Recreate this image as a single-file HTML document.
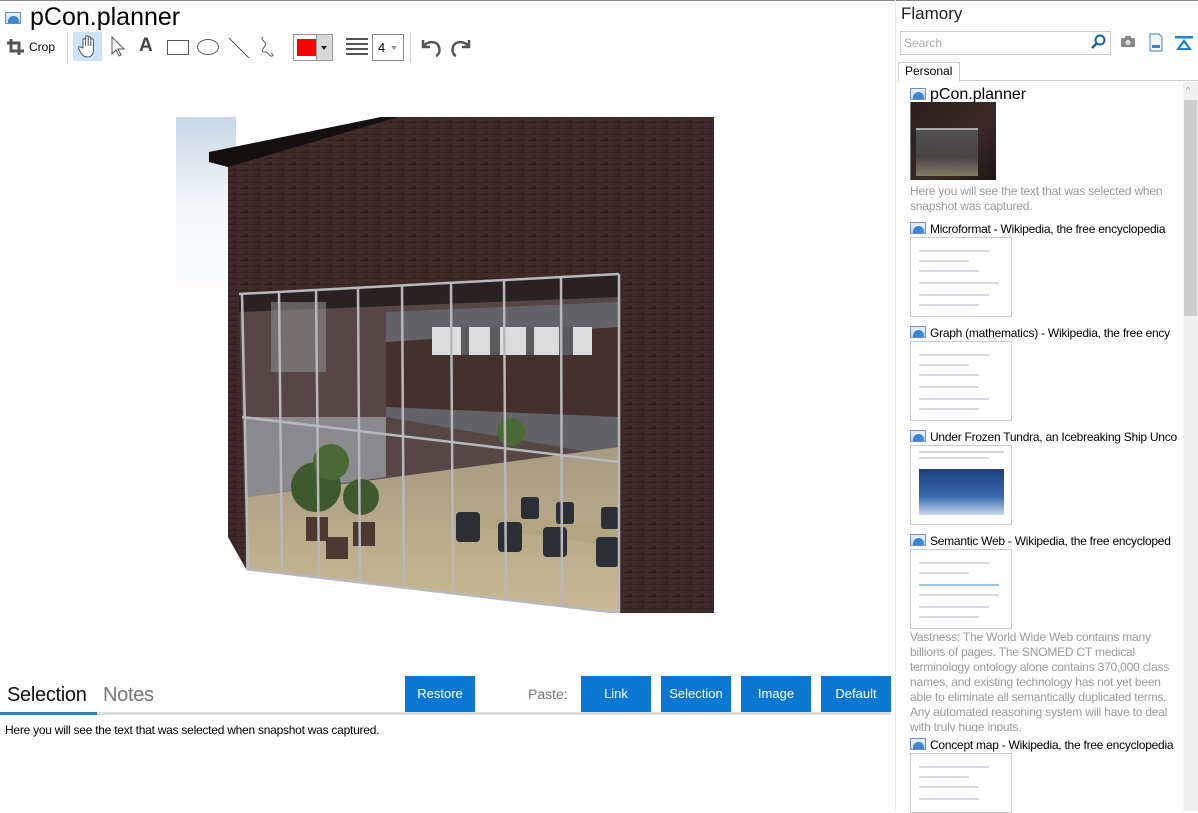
<!DOCTYPE html>
<html><head><meta charset="utf-8">
<style>
*{margin:0;padding:0;box-sizing:border-box}
body{width:1198px;height:811px;overflow:hidden;background:#fff;font-family:"Liberation Sans","DejaVu Sans",sans-serif;position:relative;color:#000}
.abs{position:absolute}
.btn{position:absolute;top:676px;height:36px;background:#0a78d0;color:#fff;font-size:13px;text-align:center;line-height:36px}
.ico{display:inline-block;width:16px;height:12px;border:1px solid #6b8fb6;background:linear-gradient(#e8f2fb,#bfd7ee);position:relative;border-radius:1px}
.ico:after{content:"";position:absolute;left:2px;top:3px;width:11px;height:7px;border-radius:7px 7px 0 0;background:#3a86d0}
.st{position:absolute;left:910px;font-size:12px;letter-spacing:-0.25px;white-space:nowrap;overflow:hidden;width:270px}
.st .ico{margin-right:4px;vertical-align:-1px}
.th{position:absolute;left:910px;width:102px;height:80px;border:1px solid #ccc;background:#fff;overflow:hidden}
.th i{position:absolute;left:8px;height:2px;background:#d4d8de;display:block}
.gtxt{position:absolute;left:910px;width:272px;font-size:12px;letter-spacing:-0.2px;line-height:15px;color:#9a9a9a}
</style></head><body>
<div class="abs" style="left:0;top:0;width:1198px;height:1px;background:#888"></div>
<div class="abs" style="left:5px;top:11px"><span class="ico"></span></div>
<div class="abs" style="left:30px;top:3px;font-size:25px">pCon.planner</div>
<svg class="abs" style="left:6px;top:38px" width="20" height="18" viewBox="0 0 20 18"><path d="M5 1v12h13M1 5h12v12" stroke="#555" stroke-width="3" fill="none"/></svg>
<div class="abs" style="left:29px;top:40px;font-size:12px">Crop</div>
<div class="abs" style="left:67px;top:32px;width:1px;height:31px;background:#ccc"></div>
<div class="abs" style="left:73px;top:32px;width:29px;height:29px;background:#cce4f7"></div>
<svg class="abs" style="left:78px;top:34px" width="20" height="25" viewBox="0 0 20 25"><path d="M5 14V6a1.3 1.3 0 0 1 2.6 0v6V3a1.3 1.3 0 0 1 2.6 0v9V4a1.3 1.3 0 0 1 2.6 0v8V6a1.3 1.3 0 0 1 2.6 0v10c0 4-2 7-6 7s-5-2-7-5l-2-4a1.2 1.2 0 0 1 2-1z" fill="#fff" stroke="#555" stroke-width="1"/></svg>
<svg class="abs" style="left:110px;top:36px" width="18" height="22" viewBox="0 0 18 22"><path d="M2 1v17l4-4 3 6 2-1-3-6h6z" fill="#fff" stroke="#555"/></svg>
<div class="abs" style="left:139px;top:35px;font-size:19px;font-weight:bold;color:#444">A</div>
<div class="abs" style="left:167px;top:40px;width:22px;height:15px;border:1px solid #555"></div>
<div class="abs" style="left:197px;top:39px;width:22px;height:16px;border:1px solid #555;border-radius:50%"></div>
<svg class="abs" style="left:228px;top:37px" width="22" height="22"><path d="M1 1l20 20" stroke="#555"/></svg>
<svg class="abs" style="left:258px;top:35px" width="20" height="25" viewBox="0 0 20 25"><path d="M5 2c-4 3 5 5 2 9s-4 6 0 6 4 5 7 4-2-3 0-3" fill="none" stroke="#555"/></svg>
<div class="abs" style="left:293px;top:34px;width:40px;height:27px;border:1px solid #999;background:#fff"></div>
<div class="abs" style="left:297px;top:39px;width:19px;height:17px;background:#f00"></div>
<div class="abs" style="left:316px;top:34px;width:17px;height:27px;background:#d8d8d8;border:1px solid #999"></div>
<div class="abs" style="left:321px;top:46px;border:3px solid transparent;border-top:4px solid #222"></div>
<div class="abs" style="left:346px;top:38px;width:22px;height:2px;background:#555;box-shadow:0 5px 0 #555,0 10px 0 #555,0 15px 0 #555"></div>
<div class="abs" style="left:372px;top:34px;width:32px;height:27px;border:1px solid #888"></div>
<div class="abs" style="left:378px;top:40px;font-size:13px">4</div>
<div class="abs" style="left:391px;top:46px;border:3px solid transparent;border-top:4px solid #999"></div>
<div class="abs" style="left:410px;top:32px;width:1px;height:31px;background:#ccc"></div>
<svg class="abs" style="left:418px;top:36px" width="56" height="22" viewBox="0 0 56 22"><path d="M5 4v7h7M5 11C8 5 19 4 21 11s-3 9-3 9" fill="none" stroke="#555" stroke-width="2.5"/><path d="M51 4v7h-7M51 11C48 5 37 4 35 11s3 9 3 9" fill="none" stroke="#555" stroke-width="2.5"/></svg>

<svg class="abs" style="left:176px;top:117px" width="538" height="496" viewBox="0 0 538 496">
<defs>
<linearGradient id="sky" x1="0" y1="0" x2="0" y2="1"><stop offset="0" stop-color="#c7d7e6"/><stop offset=".45" stop-color="#f4f7fa"/><stop offset="1" stop-color="#fff"/></linearGradient>
<linearGradient id="wall" x1="0" y1="0" x2="1" y2="1"><stop offset="0" stop-color="#3e2a2a"/><stop offset=".5" stop-color="#442c2c"/><stop offset="1" stop-color="#2e1e1f"/></linearGradient>
<pattern id="brick" width="12" height="6" patternUnits="userSpaceOnUse"><rect width="12" height="6" fill="url(#wall)"/><path d="M0 5.5h12M6 0v3M0 3v2.5" stroke="#251617" stroke-width=".7" opacity=".5"/></pattern>
<linearGradient id="floor" x1="0" y1="0" x2="0" y2="1"><stop offset="0" stop-color="#a69a80"/><stop offset="1" stop-color="#c9b994"/></linearGradient>
</defs>
<rect width="538" height="496" fill="#fff"/>
<rect width="60" height="200" fill="url(#sky)"/>
<polygon points="52,42 215,0 538,0 538,496 443,496 70,452 52,420" fill="url(#brick)"/>
<polygon points="33,35 205,0 222,0 52,50 33,45" fill="#151010"/>
<polygon points="63,177 443,157 443,496 70,452" fill="#564646"/>
<polygon points="210,195 443,185 443,340 210,300" fill="#636367"/>
<polygon points="210,225 443,210 443,300 210,290" fill="#43302f"/>
<rect x="256" y="210" width="160" height="28" fill="#dcdcdc"/>
<rect x="285" y="210" width="8" height="28" fill="#5a5a5e"/><rect x="314" y="210" width="10" height="28" fill="#5a5a5e"/><rect x="350" y="210" width="8" height="28" fill="#5a5a5e"/><rect x="383" y="210" width="14" height="28" fill="#5a5a5e"/>
<polygon points="63,177 443,157 443,180 63,195" fill="#2a2222"/>
<polygon points="70,380 443,330 443,496 70,452" fill="url(#floor)"/>
<polygon points="70,300 210,300 210,360 70,380" fill="#8a8a8d"/>
<rect x="95" y="185" width="55" height="70" fill="#8a8a8a" opacity=".6"/>
<circle cx="140" cy="370" r="25" fill="#3f5a30"/><circle cx="155" cy="345" r="18" fill="#4a6a35"/><circle cx="185" cy="380" r="18" fill="#3f5a30"/><circle cx="335" cy="315" r="14" fill="#4a6a35"/>
<rect x="130" y="400" width="22" height="24" fill="#4a3a32"/><rect x="150" y="420" width="22" height="22" fill="#4a3a32"/><rect x="177" y="405" width="22" height="24" fill="#4a3a32"/>
<polygon points="300,395 443,410 443,430 300,410" fill="#b3a582"/>
<g fill="#2d2f36"><rect x="280" y="395" width="24" height="30" rx="4"/><rect x="322" y="405" width="24" height="30" rx="4"/><rect x="367" y="410" width="24" height="30" rx="4"/><rect x="420" y="420" width="23" height="30" rx="4"/><rect x="345" y="380" width="18" height="22" rx="3"/><rect x="380" y="385" width="18" height="22" rx="3"/><rect x="425" y="390" width="18" height="22" rx="3"/></g>
<g stroke="#b8b8bc" stroke-width="2.5" fill="none">
<polyline points="63,177 443,157"/>
<polyline points="66,300 443,345"/>
<polyline points="70,452 443,496"/>
<line x1="66" y1="177" x2="72" y2="452"/><line x1="103" y1="175" x2="106" y2="456"/><line x1="140" y1="173" x2="143" y2="461"/><line x1="182" y1="171" x2="184" y2="466"/><line x1="226" y1="168" x2="228" y2="472"/><line x1="275" y1="165" x2="277" y2="477"/><line x1="328" y1="162" x2="330" y2="484"/><line x1="385" y1="160" x2="386" y2="490"/><line x1="443" y1="157" x2="443" y2="496"/>
</g>
</svg>

<div class="abs" style="left:7px;top:684px;font-size:20px;color:#111;letter-spacing:-0.3px">Selection</div>
<div class="abs" style="left:103px;top:684px;font-size:20px;color:#777;letter-spacing:-0.3px">Notes</div>
<div class="abs" style="left:0;top:712px;width:891px;height:3px;background:#dcdcdc"></div>
<div class="abs" style="left:0;top:712px;width:97px;height:3px;background:#2e7fbf"></div>
<div class="btn" style="left:405px;width:70px">Restore</div>
<div class="abs" style="left:528px;top:686px;font-size:14px;color:#777">Paste:</div>
<div class="btn" style="left:581px;width:70px">Link</div>
<div class="btn" style="left:661px;width:70px">Selection</div>
<div class="btn" style="left:741px;width:70px">Image</div>
<div class="btn" style="left:821px;width:70px">Default</div>
<div class="abs" style="left:5px;top:723px;font-size:12px;letter-spacing:-0.25px">Here you will see the text that was selected when snapshot was captured.</div>

<div class="abs" style="left:895px;top:0;width:1px;height:811px;background:#e6e6e6"></div>
<div class="abs" style="left:901px;top:4px;font-size:17px;color:#222">Flamory</div>
<div class="abs" style="left:900px;top:31px;width:211px;height:24px;border:1px solid #ccc"></div>
<div class="abs" style="left:904px;top:36px;font-size:12px;color:#aaa">Search</div>
<svg class="abs" style="left:1090px;top:34px" width="16" height="16"><circle cx="10" cy="6" r="4.5" fill="none" stroke="#1a5fa8" stroke-width="2"/><path d="M7 9l-5 5" stroke="#1a5fa8" stroke-width="2.5"/></svg>
<svg class="abs" style="left:1121px;top:36px" width="14" height="11"><rect x="0" y="2" width="14" height="9" rx="1" fill="#888"/><rect x="4" y="0" width="6" height="3" fill="#888"/><circle cx="7" cy="6.5" r="2.5" fill="#ddd"/></svg>
<svg class="abs" style="left:1149px;top:33px" width="14" height="19"><path d="M1 1h9l3 3v14H1z" fill="#f4f8fc" stroke="#3d7fc4"/><rect x="3" y="12" width="8" height="3" fill="#3d7fc4"/></svg>
<svg class="abs" style="left:1175px;top:36px" width="18" height="15"><rect x="0" y="0" width="18" height="2.5" fill="#1a7fd0"/><path d="M9 3l8 11H1z" fill="#1a7fd0"/><path d="M9 7l4 5H5z" fill="#fff"/></svg>
<div class="abs" style="left:898px;top:62px;width:62px;height:20px;border:1px solid #ccc;border-bottom:none;background:#fff"></div>
<div class="abs" style="left:905px;top:64px;font-size:12px">Personal</div>
<div class="abs" style="left:960px;top:80px;width:238px;height:1px;background:#ccc"></div>
<div class="abs" style="left:1183px;top:82px;width:15px;height:729px;background:#f0f0f0"></div>
<div class="abs" style="left:1184px;top:100px;width:13px;height:216px;background:#cdcdcd"></div>
<div class="abs" style="left:1186px;top:85px;font-size:9px;color:#999">^</div>

<div class="st" style="top:86px;font-size:16px;letter-spacing:0"><span class="ico"></span>pCon.planner</div>
<div class="abs" style="left:910px;top:102px;width:86px;height:78px;background:linear-gradient(135deg,#2b1e1e,#3b2828 60%,#1e1616);border-left:1px solid #777"></div>
<div class="abs" style="left:916px;top:128px;width:62px;height:48px;background:linear-gradient(#555 0,#4a4848 60%,#8f8570 100%);opacity:.9"></div>
<div class="abs" style="left:916px;top:128px;width:62px;height:2px;background:#aaa"></div>
<div class="gtxt" style="top:184px">Here you will see the text that was selected when snapshot was captured.</div>

<div class="st" style="top:222px"><span class="ico"></span>Microformat - Wikipedia, the free encyclopedia</div>
<div class="th" style="top:237px"><i style="top:12px;width:70px"></i><i style="top:22px;width:50px"></i><i style="top:32px;width:60px"></i><i style="top:44px;width:80px"></i><i style="top:56px;width:70px"></i><i style="top:66px;width:60px"></i></div>
<div class="st" style="top:326px"><span class="ico"></span>Graph (mathematics) - Wikipedia, the free ency</div>
<div class="th" style="top:341px"><i style="top:12px;width:70px"></i><i style="top:22px;width:50px"></i><i style="top:32px;width:60px"></i><i style="top:44px;width:60px"></i><i style="top:56px;width:70px"></i><i style="top:66px;width:60px"></i></div>
<div class="st" style="top:430px"><span class="ico"></span>Under Frozen Tundra, an Icebreaking Ship Unco</div>
<div class="th" style="top:445px"><i style="top:5px;width:85px"></i><i style="top:11px;width:70px"></i><div class="abs" style="left:8px;top:23px;width:85px;height:46px;background:linear-gradient(#1d3f7a,#3a6ab0 60%,#c9d8ea)"></div></div>
<div class="st" style="top:534px"><span class="ico"></span>Semantic Web - Wikipedia, the free encycloped</div>
<div class="th" style="top:549px"><i style="top:12px;width:70px"></i><i style="top:22px;width:50px"></i><i style="top:34px;width:80px;background:#9cc3e8"></i><i style="top:44px;width:80px"></i><i style="top:56px;width:70px"></i><i style="top:66px;width:60px"></i></div>
<div class="gtxt" style="top:630px;height:102px;overflow:hidden">Vastness: The World Wide Web contains many billions of pages. The SNOMED CT medical terminology ontology alone contains 370,000 class names, and existing technology has not yet been able to eliminate all semantically duplicated terms. Any automated reasoning system will have to deal with truly huge inputs.</div>
<div class="st" style="top:738px"><span class="ico"></span>Concept map - Wikipedia, the free encyclopedia</div>
<div class="th" style="top:753px;height:60px"><i style="top:12px;width:70px"></i><i style="top:22px;width:50px"></i><i style="top:32px;width:60px"></i><i style="top:44px;width:60px"></i></div>
</body></html>
